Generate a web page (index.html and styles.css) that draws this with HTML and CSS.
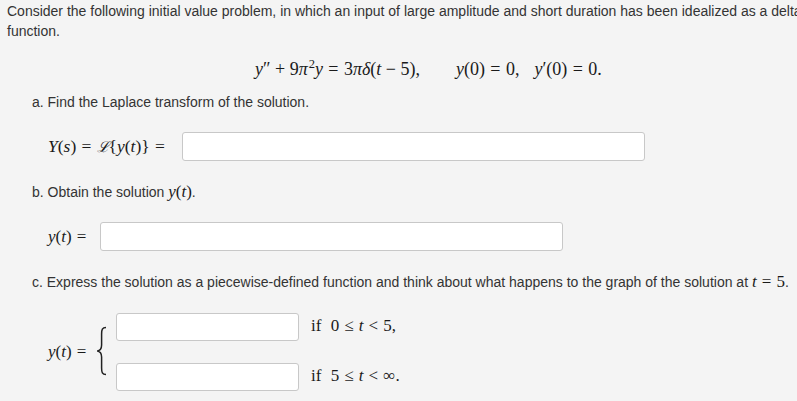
FILE: index.html
```html
<!DOCTYPE html>
<html>
<head>
<meta charset="utf-8">
<link rel="stylesheet" href="styles.css">
</head>
<body>
<div class="page">
  <p class="intro">Consider the following initial value problem, in which an input of large amplitude and short duration has been idealized as a delta function.</p>
  <div class="eq">
    <span class="m e1"><i>y</i>″<span class="bin">+</span>9<i>π</i><sup>2</sup><i>y</i><span class="rel">=</span>3<i>πδ</i>(<i>t</i><span class="bin">−</span>5),</span>
    <span class="m e2"><i>y</i>(0)<span class="rel">=</span>0,</span>
    <span class="m e3"><i>y</i>′(0)<span class="rel">=</span>0.</span>
  </div>
  <p class="q">a. Find the Laplace transform of the solution.</p>
  <div class="row r1">
    <span class="m lbl l1"><i>Y</i>(<i>s</i>)<span class="rel">=</span><span class="cal">ℒ</span>{<i>y</i>(<i>t</i>)}<span class="rel">=</span></span>
    <div class="box wide"></div>
  </div>
  <p class="q qb">b. Obtain the solution <span class="m mi"><i>y</i>(<i>t</i>)</span>.</p>
  <div class="row r2">
    <span class="m lbl l2"><i>y</i>(<i>t</i>)<span class="rel">=</span></span>
    <div class="box wide"></div>
  </div>
  <p class="q qc">c. Express the solution as a piecewise-defined function and think about what happens to the graph of the solution at <span class="m mi"><i>t</i><span class="rel">=</span>5</span>.</p>
  <div class="row r3">
    <span class="m lbl l3"><i>y</i>(<i>t</i>)<span class="rel">=</span></span>
    <svg class="brace" width="11" height="50" viewBox="0 0 11 50">
      <path d="M10,1.5 C6.2,1.5 5.6,3.5 5.6,8 L5.6,19 C5.6,22.5 4.5,24.6 1.2,25 C4.5,25.4 5.6,27.5 5.6,31 L5.6,42 C5.6,46.5 6.2,48.5 10,48.5" fill="none" stroke="#222" stroke-width="1.5"/>
    </svg>
    <div class="cases">
      <div class="case"><div class="box small"></div><span class="m cond">if<span class="sp"></span>0<span class="rel">≤</span><i>t</i><span class="rel">&lt;</span>5,</span></div>
      <div class="case"><div class="box small"></div><span class="m cond">if<span class="sp"></span>5<span class="rel">≤</span><i>t</i><span class="rel">&lt;</span>∞.</span></div>
    </div>
  </div>
</div>
</body>
</html>
```
FILE: styles.css
```css
html, body {
  margin: 0;
  padding: 0;
  background: #f4f4f4;
}
body {
  width: 797px;
  height: 401px;
  overflow: hidden;
  font-family: "Liberation Sans", Arial, sans-serif;
  font-size: 14px;
  color: #333;
}
.page {
  padding: 1px 0 0 7px;
}
.intro {
  margin: 0;
  line-height: 20px;
  width: 830px;
}
.m {
  font-family: "Liberation Serif", "Times New Roman", serif;
  font-size: 18px;
  color: #1a1a1a;
  white-space: nowrap;
}
.m sup {
  font-size: 12.5px;
  line-height: 0;
  vertical-align: 7px;
  margin-left: 1px;
}
.bin { margin: 0 0.25em; }
.rel { margin: 0 0.3em; }
.sp { display: inline-block; width: 0.55em; }
.eq {
  display: flex;
  align-items: center;
  height: 28px;
  margin-top: 14px;
  padding-left: 248px;
}
.e2 { margin-left: 36px; }
.e3 { margin-left: 15px; }
.q {
  margin: 10px 0 0 25px;
  line-height: 18px;
}
.mi { font-size: 17px; line-height: 0; }
.row {
  display: flex;
  align-items: center;
  padding-left: 41px;
}
.r1 { margin-top: 21px; }
.lbl { flex: none; }
.l1 { width: 134px; font-size: 17.5px; }
.l2 { width: 52px; font-size: 17px; }
.l3 { width: 48px; font-size: 17px; }
.cal {
  font-family: "DejaVu Serif", serif;
  font-style: italic;
  font-size: 15px;
}
.box {
  background: #fff;
  border: 1px solid #c8c8c8;
  border-radius: 3px;
  box-sizing: border-box;
  height: 29px;
  flex: none;
}
.wide { width: 463px; }
.qb { margin-top: 22px; }
.r2 { margin-top: 21px; }
.qc { margin-top: 22px; }
.r3 { margin-top: 22px; }
.brace { flex: none; margin: 0 9px 2px 0; }
.cases {
  display: flex;
  flex-direction: column;
  gap: 22px;
}
.case {
  display: flex;
  align-items: center;
}
.small { width: 183px; height: 28px; }
.cond { margin: 0 0 2px 12px; font-size: 17px; }
```
